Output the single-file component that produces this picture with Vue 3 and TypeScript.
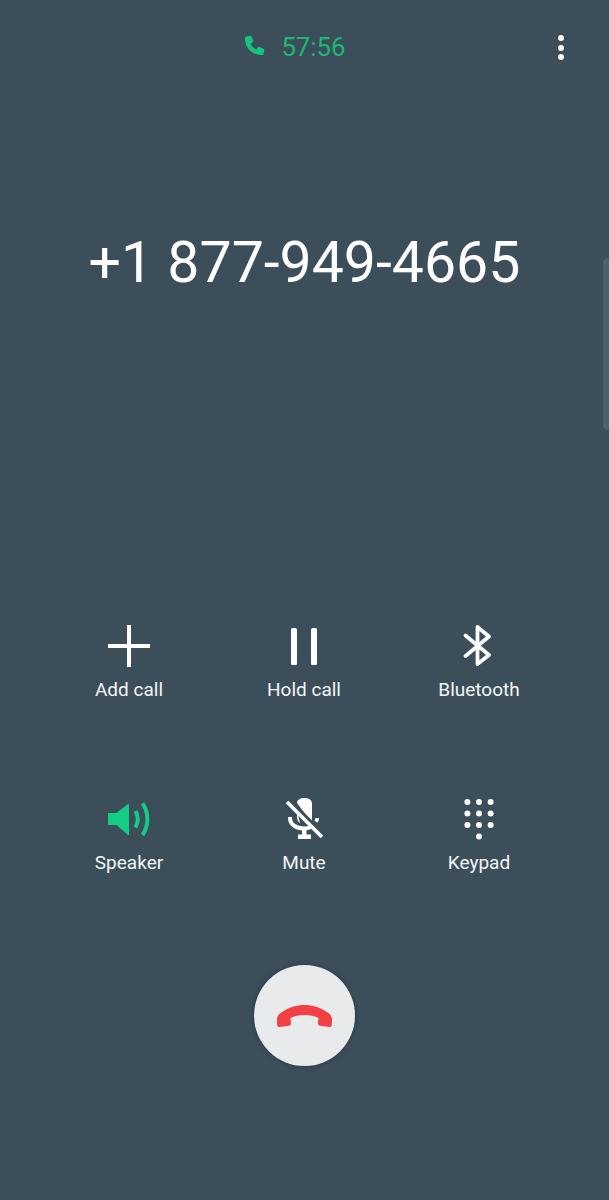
<script setup lang="ts">
const keypadDots: [number, number][] = [
  [5.4, 5], [17, 5], [28.6, 5],
  [5.4, 16.500], [17, 16.500], [28.6, 16.500],
  [5.4, 28], [17, 28], [28.6, 28],
  [17, 39.500],
];
</script>

<template>
  <div class="screen">
    <header class="top">
      <div class="timer">
        <svg class="call-icon" viewBox="0 0 24 24">
          <path d="M6.200 3 9.400 2.300c.6-.1 1.100.2 1.300.7l1.400 3.500c.2.500.1 1-.3 1.300L10 9.400c1 2 2.600 3.700 4.700 4.700l1.600-1.800c.3-.4.900-.5 1.300-.3l3.400 1.500c.5.200.8.700.7 1.300l-.7 3.100c-.1.600-.6 1-1.200 1C11.200 18.900 5 12.700 5 4.200c0-.6.500-1.100 1.200-1.200Z" />
        </svg>
        <span class="time">57:56</span>
      </div>
      <div class="more" aria-label="More options">
        <i></i><i></i><i></i>
      </div>
    </header>

    <h1 class="number">+1 877-949-4665</h1>

    <section class="actions">
      <div class="action">
        <svg class="icon" viewBox="0 0 44 44">
          <path d="M22 1v42M1 22h42" fill="none" stroke="#fff" stroke-width="4" />
        </svg>
        <span class="label">Add call</span>
      </div>
      <div class="action">
        <svg class="icon" viewBox="0 0 44 44">
          <rect x="9" y="4" width="6" height="37" rx="1.500" fill="#fff" />
          <rect x="29" y="4" width="6" height="37" rx="1.500" fill="#fff" />
        </svg>
        <span class="label">Hold call</span>
      </div>
      <div class="action">
        <svg class="icon" viewBox="0 0 44 44">
          <path d="M8.500 11.500 32 31 20.500 40V3L32 12.500 8.500 32" fill="none" stroke="#fff" stroke-width="3.800" stroke-linejoin="round" stroke-linecap="round" />
        </svg>
        <span class="label">Bluetooth</span>
      </div>
      <div class="action">
        <svg class="icon" viewBox="0 0 44 44">
          <path d="M1 16h8.500L21 7c.4-.3 1-.1 1 .5v30c0 .6-.6.800-1 .5L9.500 28H1Z" fill="#13cd85" />
          <path d="M28.500 14c2.700 4.500 2.700 11 0 16.500" fill="none" stroke="#13cd85" stroke-width="4" />
          <path d="M35.500 6.500c6.500 9 6.500 22 0 31.500" fill="none" stroke="#13cd85" stroke-width="4" />
        </svg>
        <span class="label">Speaker</span>
      </div>
      <div class="action">
        <svg class="icon" viewBox="0 0 44 44">
          <path d="M15 6c0-3 3-5 7.500-5S30 3 30 7v19Z" fill="#fff" />
          <path d="M15 13v7c0 2.500 1 4.800 3 6Z" fill="#fff" />
          <path d="M8 20v1c0 6.500 6 10.500 14 10.500 2.600 0 5-.5 7-1.500" fill="none" stroke="#fff" stroke-width="4" />
          <path d="M33.500 21h3.500c0 1.500-.5 3-1 4.500l-3.500-1.500Z" fill="#fff" />
          <rect x="20" y="32" width="4.500" height="6" fill="#fff" />
          <rect x="16" y="37.500" width="13" height="4.500" fill="#fff" />
          <path d="M7.500 3 42.500 38" fill="none" stroke="#3b4e5a" stroke-width="3" />
          <path d="M5 5 40 40" fill="none" stroke="#fff" stroke-width="3.600" />
        </svg>
        <span class="label">Mute</span>
      </div>
      <div class="action">
        <svg class="icon" viewBox="0 0 34 44">
          <circle v-for="(d, i) in keypadDots" :key="i" :cx="d[0]" :cy="d[1]" r="3" fill="#fff" />
        </svg>
        <span class="label">Keypad</span>
      </div>
    </section>

    <div class="end-wrap">
      <button class="end" aria-label="End call">
        <svg class="end-icon" viewBox="0 0 56 24">
          <path d="M.5 15.500C.5 11.500 3 9.500 6 7.800 12 3.500 20 1 28 1s16 2.500 22 6.800c3 1.700 5.500 3.700 5.500 7.700 0 2 0 4.200-.3 5.700-.2 1.300-1.100 2-2.400 1.800l-9.300-1.300c-1.300-.2-2-1.100-2-2.300 0-1.800.3-3.800.6-5.400-3.300-1.700-9-2.900-14.100-2.900s-10.800 1.200-14.100 2.900c.3 1.600.6 3.600.6 5.400 0 1.200-.7 2.100-2 2.300L3.200 23c-1.300.2-2.200-.5-2.400-1.800-.3-1.500-.3-3.700-.3-5.700Z" fill="#f34045" />
        </svg>
      </button>
    </div>

    <div class="edge"></div>
  </div>
</template>

<style scoped>
.screen {
  position: relative;
  width: 609px;
  height: 1200px;
  overflow: hidden;
  background: #3b4e5a;
  color: #fff;
  font-family: Roboto, "Liberation Sans", sans-serif;
  display: flex;
  flex-direction: column;
}
.top {
  position: relative;
  height: 94px;
  display: flex;
  align-items: center;
  justify-content: center;
}
.timer {
  display: flex;
  align-items: center;
  gap: 14px;
  color: #1bb873;
  margin-right: 24px;
}
.call-icon {
  width: 28px;
  height: 28px;
  fill: #14c47d;
}
.time {
  font-size: 25.800px;
  line-height: 30px;
  font-weight: 400;
}
.more {
  position: absolute;
  left: 558px;
  top: 35px;
  display: flex;
  flex-direction: column;
  gap: 3.500px;
}
.more i {
  display: block;
  width: 6px;
  height: 6px;
  border-radius: 50%;
  background: #fff;
}
.number {
  margin: 132px 0 0;
  height: 74px;
  line-height: 74px;
  text-align: center;
  font-size: 57.200px;
  font-weight: 400;
  white-space: nowrap;
}
.actions {
  margin: 324px 0 0 41.500px;
  width: 525px;
  display: grid;
  grid-template-columns: repeat(3, 175px);
  grid-auto-rows: 173px;
}
.action {
  display: flex;
  flex-direction: column;
  align-items: center;
}
.icon {
  width: 44px;
  height: 44px;
  display: block;
}
.label {
  margin-top: 10px;
  font-size: 19px;
  line-height: 24px;
  color: #f3f6f7;
  white-space: nowrap;
}
.end-wrap {
  display: flex;
  justify-content: center;
  margin-top: -5px;
}
.end {
  width: 101px;
  height: 101px;
  padding: 0;
  border: 0;
  border-radius: 50%;
  background: #e9eaec;
  box-shadow: 0 0 4px rgba(20, 30, 38, 0.45);
  display: flex;
  align-items: center;
  justify-content: center;
}
.end-icon {
  width: 57px;
  height: 24px;
  display: block;
}
.edge {
  position: absolute;
  left: 603px;
  top: 258px;
  width: 6px;
  height: 172px;
  border-radius: 5px 0 0 5px;
  background: #4d606b;
}
</style>
